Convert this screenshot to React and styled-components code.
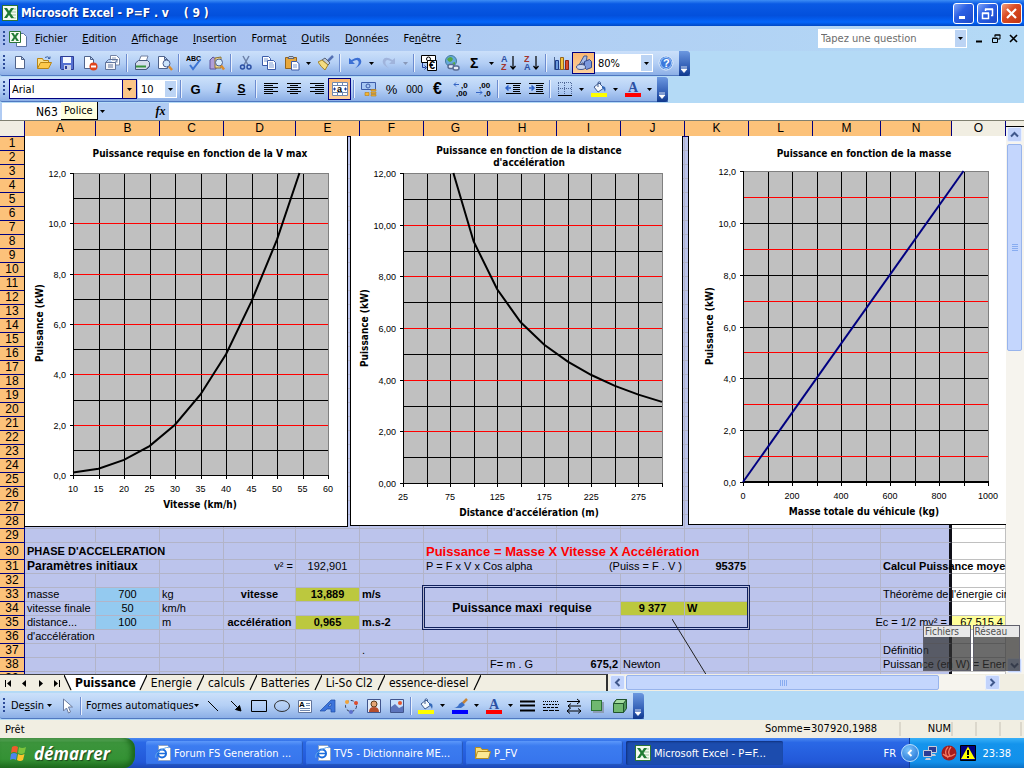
import React from "react";
import styled, { createGlobalStyle, css } from "styled-components";

const ui = `"DejaVu Sans Condensed", "DejaVu Sans", sans-serif`;
const arial = `"Liberation Sans", Arial, sans-serif`;

const c = {
  pane: "#b4daf6",
  beige: "#f1eee2",
  lavender: "#bcc4ec",
  orange: "#fcc27a",
  navy: "#000080",
  olive: "#bcc83e",
  sky: "#94caf0",
};

const GlobalStyle = createGlobalStyle`
  * { box-sizing: border-box; }
  body { margin: 0; font-family: ${ui}; font-size: 11px; color: #000; }
  button, input, select { font: inherit; color: inherit; margin: 0; padding: 0; border: 0; background: none; }
  svg { display: block; flex: none; }
`;

const Window = styled.div`
  display: flex;
  flex-direction: column;
  height: 100vh;
  min-width: 0;
  overflow: hidden;
  background: ${c.pane};
`;

const TitleBar = styled.header`
  display: flex;
  align-items: center;
  gap: 3px;
  flex: none;
  height: 26px;
  padding: 0 2px;
  background: linear-gradient(#3d8df5, #0a5ae4 15%, #0350dc 60%, #0466fb 85%, #0048c4);
  color: #fff;
`;

const WindowTitle = styled.h1`
  flex: 1;
  margin: 0;
  font-size: 12px;
  font-weight: bold;
  white-space: pre;
  text-shadow: 1px 1px #0a2f8c;
`;

const CaptionButton = styled.button`
  display: flex;
  align-items: center;
  justify-content: center;
  width: 21px;
  height: 21px;
  border: 1px solid #fff;
  border-radius: 3px;
  background: ${(props) =>
    props.$close
      ? "linear-gradient(135deg, #f0a080, #dc4c24 40%, #c03410)"
      : "linear-gradient(135deg, #80a4f8, #2c60e4 40%, #1c48c8)"};
`;

const MenuBar = styled.nav`
  display: flex;
  align-items: center;
  flex: none;
  height: 25px;
  padding-right: 2px;
  background: linear-gradient(90deg, #a8bef0, #b0cdf3 50%, ${c.pane});
`;

const Grip = styled.span`
  flex: none;
  width: 3px;
  height: 16px;
  margin: 0 3px;
  background: repeating-linear-gradient(#2c4a98 0 2px, transparent 2px 4px);
  background-size: 2px 100%;
  background-repeat: no-repeat;
`;

const Menus = styled.div`
  display: flex;
  padding-left: 1px;
`;

const MenuItem = styled.button`
  height: 20px;
  padding: 0 8px 0 7px;
`;

const Spacer = styled.div`
  flex: 1;
`;

const AskBox = styled.label`
  display: flex;
  width: 149px;
  height: 19px;
  margin-right: 4px;
  border: 1px solid #fff;
  background: #fff;

  input {
    flex: 1;
    min-width: 0;
    padding-left: 2px;
    outline: 0;
  }

  input::placeholder {
    color: #6c6c6c;
    opacity: 1;
  }
`;

const ArrowBox = styled.span`
  display: flex;
  align-items: center;
  justify-content: center;
  flex: none;
  width: ${(props) => (props.$hot ? 14 : 11)}px;
  background: ${(props) => (props.$hot ? "#fbc687" : "#bcd4f4")};
  border-left: ${(props) => (props.$hot ? "1px solid #000080" : 0)};
`;

const MdiButton = styled.button`
  display: flex;
  align-items: center;
  justify-content: center;
  width: 17px;
  height: 16px;
`;

const ToolRow = styled.div`
  display: flex;
  flex: none;
  height: ${(props) => (props.$tall ? 27 : 26)}px;
  padding-bottom: 1px;
`;

const Toolbar = styled.div`
  display: flex;
  align-items: center;
  border-radius: 2px 0 0 2px;
  border-bottom: 1px solid #5078c0;
  background: linear-gradient(#cbe0fa, #b4cff5 50%, #8cafe6);
`;

const ToolButton = styled.button`
  display: flex;
  align-items: center;
  justify-content: center;
  flex: none;
  width: 23px;
  height: 22px;
  ${(props) =>
    props.$on &&
    css`
      border: 1px solid ${c.navy};
      background: linear-gradient(#fbb872, #fcd09c);
    `}
`;

const DropButton = styled.button`
  display: flex;
  align-items: center;
  justify-content: center;
  flex: none;
  width: 11px;
  height: ${(props) => (props.$short ? 17 : 22)}px;
`;

const TextButton = styled.button`
  display: flex;
  align-items: center;
  justify-content: space-between;
  flex: none;
  width: ${(props) => (props.$wide ? 117 : 46)}px;
  height: 22px;
  padding: 0 3px 0 2px;
  white-space: nowrap;
`;

const Separator = styled.span`
  flex: none;
  width: 1px;
  height: 18px;
  margin: 0 3px 0 2px;
  background: #6c8cd0;
  box-shadow: 1px 0 #e8f0fc;
`;

const EndCap = styled.button`
  display: flex;
  align-items: flex-end;
  justify-content: center;
  flex: none;
  align-self: stretch;
  width: 11px;
  margin: 0 0 -1px 2px;
  padding-bottom: 3px;
  border-radius: 0 3px 3px 0;
  background: linear-gradient(#6c98e0, #2c58b0 70%, #10388c);
`;

const Combo = styled.label`
  display: flex;
  flex: none;
  width: ${(props) => props.$w}px;
  height: ${(props) => (props.$hot ? 20 : 18)}px;
  margin-right: 1px;
  border: 1px solid ${(props) => (props.$hot ? c.navy : "#fff")};
  background: #fff;

  select {
    flex: 1;
    min-width: 0;
    padding-left: 2px;
    appearance: none;
    outline: 0;
  }
`;

const FormulaBar = styled.div`
  position: relative;
  display: flex;
  align-items: stretch;
  flex: none;
  height: 17px;
  padding-left: 2px;
  background: #b0cbf3;
`;

const NameBox = styled.input`
  width: 95px;
  padding-left: 34px;
  background: #fff;
  font-size: 12px;
  outline: 0;
`;

const FxButton = styled.button`
  width: 17px;
  margin-left: 44px;
  font: italic bold 12px "Liberation Serif", serif;
`;

const FormulaInput = styled.input`
  flex: 1;
  min-width: 0;
  background: #fff;
  outline: 0;
`;

const Tooltip = styled.div`
  position: absolute;
  left: 61px;
  top: -1px;
  height: 18px;
  padding: 0 4px 0 3px;
  border: solid #000;
  border-width: 0 1px 1px 0;
  background: #ffffe1;
  line-height: 18px;
`;

const SheetArea = styled.main`
  display: flex;
  flex: 1;
  min-height: 0;
  border-top: 1px solid #808070;
  background: ${c.beige};
`;

const SheetView = styled.div`
  position: relative;
  flex: 1;
  min-width: 0;
  overflow: hidden;
`;

const Grid = styled.table`
  width: 100%;
  table-layout: fixed;
  border-collapse: separate;
  border-spacing: 0;
  font-family: ${arial};
  font-size: 11px;
  line-height: 13px;
  white-space: pre;
`;

const Head = styled.th`
  height: ${(props) => (props.$row ? 14 : 16)}px;
  padding: 0;
  border: solid ${c.navy};
  border-width: 0 1px 1px 0;
  background: ${(props) => (props.$plain ? c.beige : c.orange)};
  font-size: 12px;
  font-weight: normal;
  text-align: center;
`;

const Cell = styled.td`
  height: ${(props) => (props.$tall ? 17 : 14)}px;
  padding: 0 2px;
  border: solid ${(props) => (props.$plain ? "#c0c0c0" : "#b2b4c8")};
  border-width: 0 1px 1px 0;
  background: ${(props) =>
    props.$fill || (props.$plain ? "#fff" : c.lavender)};
  text-align: ${(props) => props.$align || "left"};
  font-weight: ${(props) => (props.$bold ? "bold" : "normal")};
  font-size: ${(props) => props.$size || 11}px;
  color: ${(props) => props.$color || "#000"};
  ${(props) => props.$thick && "border-right: 3px solid #101018;"}
`;

/* objects floating over the grid, placed from the sheet's origin */
const Floating = styled.figure`
  position: absolute;
  left: ${(props) => props.$x}px;
  top: ${(props) => props.$y}px;
  margin: 0;
`;

const ChartSvg = styled.svg`
  background: #fff;
  border: 1px solid #000;
  border-top-width: 0;

  text {
    font: bold 10px ${ui};
    text-anchor: middle;
  }

  .scale text {
    font: 9px ${arial};
  }

  .left text {
    text-anchor: end;
  }
`;

const Frame = styled.div`
  width: 328px;
  height: 45px;
  border: 3px double #10205c;
`;

const TrafficMeter = styled.div`
  position: absolute;
  right: 4px;
  bottom: 3px;
  display: grid;
  grid-template-columns: 1fr 1fr;
  gap: 0 2px;
  width: 97px;
  height: 46px;
  z-index: 2;
`;

const Meter = styled.div`
  display: flex;
  flex-direction: column;
  border: 1px solid #60606c;
  background: rgba(50, 50, 50, 0.72);

  span {
    height: 11px;
    padding-left: 1px;
    background: rgba(255, 255, 255, 0.85);
    color: #505050;
    font-size: 10px;
    line-height: 11px;
  }
`;

const SheetWrap = styled.div`
  position: relative;
  display: flex;
  flex: 1;
  min-width: 0;
`;

const VScroll = styled.div`
  display: flex;
  flex-direction: column;
  flex: none;
  width: 18px;
  margin-top: 5px;
  padding: 0 2px 1px 1px;
  border-top: 1px solid #000;
  background: #f6f4ee;
`;

const ScrollButton = styled.button`
  display: flex;
  align-items: center;
  justify-content: center;
  flex: none;
  width: 15px;
  height: 15px;
  border: 1px solid #e8f0ff;
  border-radius: 2px;
  background: #c2d3fc;
`;

const VThumb = styled.div`
  display: flex;
  align-items: center;
  justify-content: center;
  height: 38%;
  margin-top: 2px;
  border: 1px solid #98b4ec;
  border-radius: 2px;
  background: #c4d6fd;
`;

const BottomBar = styled.div`
  display: grid;
  grid-template-columns: minmax(0, 19fr) minmax(0, 13fr);
  flex: none;
  height: 17px;
  margin-bottom: 2px;
  background: ${c.beige};
`;

const TabStrip = styled.div`
  display: flex;
  border-top: 1px solid #404040;
  border-right: 2px solid #303030;
  overflow: hidden;
`;

const NavButton = styled.button`
  display: flex;
  align-items: center;
  justify-content: center;
  width: 16px;
`;

const Tab = styled.button`
  padding: 0 ${(props) => (props.$active ? 3 : 4)}px;
  background: ${(props) => (props.$active ? "#fff" : "transparent")};
  font-size: 12px;
  font-weight: ${(props) => (props.$active ? "bold" : "normal")};
  line-height: 15px;
  white-space: nowrap;
`;

const HScroll = styled.div`
  display: flex;
  padding: 1px 24px 1px 2px;
`;

const HThumb = styled.div`
  display: flex;
  align-items: center;
  justify-content: center;
  width: 87%;
  height: 15px;
  margin-left: 1px;
  border: 1px solid #98b4ec;
  border-radius: 2px;
  background: #c4d6fd;
`;

const HTrack = styled.div`
  display: flex;
  flex: 1;
  background: #f6f4ee;
`;

const StatusBar = styled.footer`
  display: flex;
  align-items: center;
  flex: none;
  height: 18px;
  padding: 0 2px 0 5px;
  background: ${c.beige};
`;

const StatusPanel = styled.span`
  height: 14px;
  width: ${(props) => props.$w}px;
  border-right: 2px solid #dcd8cc;
  line-height: 14px;
  text-align: ${(props) => props.$align || "center"};
`;

const Taskbar = styled.div`
  display: flex;
  align-items: center;
  flex: none;
  height: 30px;
  background: linear-gradient(#4a88f0, #2a68e6 15%, #2258d8 80%, #1c48b4);
  color: #fff;
`;

const StartButton = styled.button`
  display: flex;
  align-items: center;
  gap: 6px;
  flex: none;
  width: 135px;
  height: 30px;
  padding-left: 10px;
  border-radius: 0 10px 12px 0;
  background: linear-gradient(#6cb46c, #3c943c 15%, #349234 70%, #206c20);
  box-shadow: inset -4px 0 5px #1c681c;
  color: #fff;
  font: italic bold 17px "Open Sans", sans-serif;
  text-shadow: 1px 1px 1px #1c441c;
`;

const Tasks = styled.div`
  display: flex;
  flex: 1;
  gap: 3px;
  min-width: 0;
  margin: 0 11px;
`;

const TaskButton = styled.button`
  display: flex;
  align-items: center;
  gap: 3px;
  flex: 0 1 157px;
  min-width: 0;
  height: 24px;
  padding: 0 9px;
  overflow: hidden;
  border-radius: 2px;
  background: ${(props) =>
    props.$active ? "#1c4cae" : "linear-gradient(#5c98fa, #3c7cf0 20%, #3674ec)"};
  box-shadow: ${(props) =>
    props.$active ? "inset 1px 1px 2px #10307c" : "inset -1px -1px 1px #2454b8"};
  white-space: nowrap;
`;

const Lang = styled.span`
  width: 26px;
`;

const Tray = styled.div`
  display: flex;
  align-items: center;
  gap: 3px;
  flex: none;
  height: 30px;
  padding-right: 13px;
  border-left: 1px solid #103c9c;
  background: linear-gradient(#38b0f8, #1494ec 20%, #1290ea 80%, #0c70c4);

  time {
    margin-left: 3px;
  }
`;

const TrayArrow = styled.button`
  display: flex;
  align-items: center;
  justify-content: center;
  width: 18px;
  height: 18px;
  margin-left: -9px;
  border: 1px solid #bce0fc;
  border-radius: 50%;
  background: radial-gradient(circle at 40% 30%, #7cc4fc, #1468d0);
`;

function Svg({ w = 16, h = 16, children, ...rest }) {
  return (
    <svg width={w} height={h} viewBox={`0 0 ${w} ${h}`} fill="none" aria-hidden="true" {...rest}>
      {children}
    </svg>
  );
}

const Down = ({ color = "#000" }) => (
  <Svg w={5} h={3}>
    <path d="M0 0h5L2.500 3z" fill={color} />
  </Svg>
);

const Page = ({ x = 0, y = 0 }) => (
  <path d={`M${x + 2.5} ${y + 1.5}h6l3 3v9h-9z m6 0v3h3`} fill="#fff" stroke="#50648c" />
);

const Lines = ({ rows, color = "#000" }) =>
  rows.map(([x, w], i) => <rect key={i} x={x} y={2 + i * 2} width={w} height="1" fill={color} />);

const Bucket = () => (
  <>
    <path d="M3 6l5-4 5 5-6 4z" fill="#f4f8fc" stroke="#405c90" />
    <path d="M7 6V1.500q1.500-1.500 2.500 0V4" stroke="#405c90" />
    <path d="M11 5q5 0 3 6-1-3-3-4z" fill="#3468b8" />
  </>
);

const LetterA = () => (
  <text x="8" y="11" textAnchor="middle" fontSize="14" fontWeight="bold" fontFamily="Liberation Serif, serif" fill="#2c50a4">
    A
  </text>
);

const Mini = ({ x, y, size = 9, fill = "#000", children }) => (
  <text x={x} y={y} fontSize={size} fontWeight="bold" fontFamily="Liberation Sans, sans-serif" fill={fill}>
    {children}
  </text>
);

const icons = {
  excel: (
    <>
      <rect x=".5" y=".5" width="15" height="15" fill="#f4fbf0" stroke="#2c7438" />
      <path d="M9 4h5M9 7h5M9 10h5M9 13h5" stroke="#9cc49c" />
      <path d="M2 3h3l2 3 2-3h3L8.500 8l3.500 5H9L7 10l-2 3H2l3.500-5z" fill="#207c34" />
    </>
  ),
  nouveau: <Page />,
  ouvrir: (
    <>
      <path d="M1.500 13.500v-10h5l1 2h5v3" fill="#fce088" stroke="#b88414" />
      <path d="M1.500 13.500l3-6h11l-3 6z" fill="#fcc84c" stroke="#b88414" />
      <path d="M9 2.500q3-2 5 1m0-2v2h-2" stroke="#3c64a8" />
    </>
  ),
  enregistrer: (
    <>
      <path d="M1.500 1.500h13v13h-12l-1-1z" fill="#5470d0" stroke="#2c3c94" />
      <rect x="4" y="2" width="8" height="6" fill="#f4f8ff" />
      <rect x="5" y="10" width="7" height="5" fill="#c8d0e8" />
      <rect x="6" y="11" width="2" height="3" fill="#2c3c94" />
    </>
  ),
  autorisation: (
    <>
      <Page />
      <circle cx="11.500" cy="11.500" r="4" fill="#e0441c" />
      <path d="M9 11.500h5" stroke="#fff" strokeWidth="2" />
    </>
  ),
  message: (
    <>
      <path d="M5.500 5V.5h6l3 3V10h-5" fill="#fff" stroke="#7484a4" />
      <path d="M7 3h4M7 5h6M10 7h3" stroke="#90a0bc" />
      <path d="M.5 7.500h10v7H.5z" fill="#f4f4f8" stroke="#60749c" />
      <path d="M.5 7.500l3-3h9l-2 3M3 10h5M3 12h5" stroke="#60749c" />
    </>
  ),
  imprimer: (
    <>
      <path d="M5 6l2-5h7l-2 6z" fill="#fff" stroke="#7080a0" />
      <path d="M1.500 8l3-2.500h9l2 2v4l-3 3h-11z" fill="#d4dcec" stroke="#44587c" />
      <path d="M2 11.500h10" stroke="#38943c" strokeWidth="2" />
      <path d="M12.500 14l3-3" stroke="#44587c" />
    </>
  ),
  apercu: (
    <>
      <Page x={-1} />
      <circle cx="9.500" cy="8.500" r="3.500" fill="#cce4fc" stroke="#4c6090" />
      <path d="M12 11.500l3 3.500" stroke="#dc8c2c" strokeWidth="2.500" />
    </>
  ),
  orthographe: (
    <>
      <Mini x="0" y="6" size={7}>ABC</Mini>
      <path d="M4 10l3 4 7-9" stroke="#3c74d4" strokeWidth="2" />
    </>
  ),
  recherche: (
    <>
      <path d="M1 5l3-3 3 2v10H1z" fill="#b0a0d8" stroke="#5c549c" />
      <path d="M6 3l6-1v11H6z" fill="#f0d890" stroke="#8c7434" />
      <circle cx="10" cy="7.500" r="3.500" fill="#d8ecfc" stroke="#4c6090" />
      <path d="M12 10.500l3 4" stroke="#dc8c2c" strokeWidth="2.500" />
    </>
  ),
  couper: (
    <>
      <path d="M5 1l5 9M11 1l-5 9" stroke="#6c80a8" strokeWidth="1.500" />
      <circle cx="4.500" cy="12" r="2" stroke="#2c50a4" strokeWidth="1.500" />
      <circle cx="11" cy="12" r="2" stroke="#2c50a4" strokeWidth="1.500" />
    </>
  ),
  copier: (
    <>
      <path d="M1.500 1.500h6l2 2v7h-8z" fill="#fff" stroke="#3c5ca8" />
      <path d="M6.500 5.500h6l2 2v7h-8z" fill="#fff" stroke="#3c5ca8" />
      <path d="M3 4h4M3 6h3M8 8h4M8 10h5M8 12h5" stroke="#7c9cd4" />
    </>
  ),
  coller: (
    <>
      <path d="M1.500 2.500h11v11h-11z" fill="#e8a83c" stroke="#94641c" />
      <path d="M4 3.500l1-2h4l1 2z" fill="#c8ccd8" stroke="#606878" />
      <path d="M7.500 6.500h5l2.500 2v6.500H7.500z" fill="#fff" stroke="#3c5ca8" />
      <path d="M9 10h4M9 12h4" stroke="#7c9cd4" />
    </>
  ),
  pinceau: (
    <>
      <path d="M15 1l-5 5" stroke="#5470b4" strokeWidth="2.500" />
      <path d="M7 3l5 5-2 2-6-5z" fill="#c0c8d4" stroke="#586478" />
      <path d="M4 5l6 5-3 5Q3 12 0 7z" fill="#f4dc80" stroke="#a4842c" />
    </>
  ),
  annuler: (
    <path d="M2 3v6h6L5.500 6.500q5-3 6 0t-3.500 7q8-4 6-8.500T4.500 5z" fill="#3c70d4" />
  ),
  retablir: (
    <path d="M14 3v6H8l2.500-2.500q-5-3-6 0t3.500 7q-8-4-6-8.500T11.500 5z" fill="#a0b4dc" />
  ),
  euros: (
    <>
      <path d="M.5.5h14v7H.5z" fill="#fff" stroke="#000" />
      <circle cx="7.500" cy="4" r="2" stroke="#000" />
      <path d="M6.500 5.500h9v10h-9z" fill="#fff" stroke="#000" />
      <Mini x="8" y="14" size={11}>€</Mini>
      <path d="M1.500 8v4.500h3m-1-2l2 2-2 2" stroke="#1c3c9c" />
    </>
  ),
  lien: (
    <>
      <circle cx="7" cy="6" r="5.500" fill="#64a8dc" stroke="#447c9c" />
      <path d="M3 4q4-4 6 0-1 3-3 3T3 4zM8 8l3-1v3z" fill="#54a844" />
      <rect x="4" y="9.500" width="6" height="4" rx="2" fill="#e4ecf8" stroke="#586c94" strokeWidth="1.500" />
      <rect x="9" y="11" width="6" height="4" rx="2" fill="#e4ecf8" stroke="#586c94" strokeWidth="1.500" />
    </>
  ),
  somme: <Mini x="3" y="13" size={14}>Σ</Mini>,
  croissant: (
    <>
      <Mini x="0" y="7" size={9} fill="#2c50a4">A</Mini>
      <Mini x="0" y="15" size={9} fill="#a4342c">Z</Mini>
      <path d="M12 1v13M9.500 11l2.500 3 2.500-3" stroke="#000" strokeWidth="1.200" />
    </>
  ),
  decroissant: (
    <>
      <Mini x="0" y="7" size={9} fill="#a4342c">Z</Mini>
      <Mini x="0" y="15" size={9} fill="#2c50a4">A</Mini>
      <path d="M12 1v13M9.500 11l2.500 3 2.500-3" stroke="#000" strokeWidth="1.200" />
    </>
  ),
  graphique: (
    <>
      <path d="M1.500 2v12.500H16" stroke="#506890" />
      <path d="M2.500 5.500h3v9h-3z" fill="#6c9cdc" stroke="#1c3c8c" />
      <path d="M7.500 2.500h3v12h-3z" fill="#f4c43c" stroke="#94641c" />
      <path d="M12.500 5.500h3v9h-3z" fill="#dc4c2c" stroke="#8c2414" />
    </>
  ),
  dessin: (
    <>
      <path d="M3 10l5-9h3l-1 9H7.500V8H6l-1 2z" fill="#a8bce8" stroke="#44588c" />
      <path d="M8.500 6.500l5-2 2 2v6l-5 2-2-2z" fill="#7c98dc" stroke="#34488c" />
      <ellipse cx="5" cy="12" rx="4.500" ry="2.500" fill="#c8d4f0" stroke="#44588c" />
    </>
  ),
  aide: (
    <>
      <circle cx="8" cy="8" r="7" fill="#3c78dc" stroke="#e4f0fc" />
      <circle cx="8" cy="8" r="5.500" stroke="#a8ccf8" />
      <Mini x="5" y="12" size={11} fill="#fff">?</Mini>
    </>
  ),
  gauche: <Lines rows={[[1, 14], [1, 9], [1, 14], [1, 9], [1, 14], [1, 9]]} />,
  centre: <Lines rows={[[1, 14], [4, 8], [1, 14], [4, 8], [1, 14], [4, 8]]} />,
  droite: <Lines rows={[[1, 14], [6, 9], [1, 14], [6, 9], [1, 14], [6, 9]]} />,
  fusion: (
    <>
      <path d="M.5 1.500h15v13H.5zM.5 4.500h15M.5 11.500h15M5.500 1v3M10.500 1v3M5.500 12v3M10.500 12v3" fill="#fff" stroke="#7088b0" />
      <Mini x="5" y="11" size={9}>a</Mini>
      <path d="M1 8h3M2.500 6.500v3M15 8h-3M13.500 6.500v3" stroke="#1c3c9c" />
    </>
  ),
  monetaire: (
    <>
      <path d="M.5 1.500h14v7H.5z" fill="#a8c8f4" stroke="#3c5ca8" />
      <circle cx="7" cy="5" r="2" stroke="#3c5ca8" />
      <path d="M10 8.500h5v1.500h-5zM10 11h5v1.500h-5zM10 13.500h5v1.500h-5zM4 11.500h4v3H4z" fill="#f4b434" stroke="#b47c14" strokeWidth=".6" />
    </>
  ),
  ajoutDecimale: (
    <>
      <Mini x="8" y="7" size={8}>,0</Mini>
      <Mini x="3" y="15" size={8}>,00</Mini>
      <path d="M6 3.500H1m2-2l-2 2 2 2" stroke="#3464c4" />
    </>
  ),
  retraitDecimale: (
    <>
      <Mini x="3" y="7" size={8}>,00</Mini>
      <Mini x="8" y="15" size={8}>,0</Mini>
      <path d="M0 11.500h6m-2-2l2 2-2 2" stroke="#3464c4" />
    </>
  ),
  diminuerRetrait: (
    <>
      <Lines rows={[[1, 15], [8, 7], [8, 7], [8, 7], [8, 7], [1, 15]]} />
      <path d="M6 7H1m2.500-2.500L1 7l2.500 2.500" stroke="#2c60c8" strokeWidth="1.500" />
    </>
  ),
  augmenterRetrait: (
    <>
      <Lines rows={[[1, 15], [8, 7], [8, 7], [8, 7], [8, 7], [1, 15]]} />
      <path d="M1 7h5M3.500 4.500L6 7 3.500 9.500" stroke="#2c60c8" strokeWidth="1.500" />
    </>
  ),
  bordures: (
    <>
      <path d="M1.500 2v12M7.500 2v12M14.500 2v12M1 1.500h14M1 7.500h14" stroke="#506898" strokeDasharray="1 1" />
      <path d="M1 14.500h14" stroke="#000" />
    </>
  ),
  remplissage: (
    <>
      <Bucket />
      <rect y="12" width="16" height="4" fill="#ff0" />
    </>
  ),
  couleurTexte: (
    <>
      <LetterA />
      <rect y="12" width="16" height="4" fill="#f00" />
    </>
  ),
  couleurTrait: (
    <>
      <path d="M15 1l-5 5" stroke="#c88434" strokeWidth="2.500" />
      <path d="M10 4l3 3-4 3H2q4-1 5-4z" fill="#3c70c8" />
      <rect y="12" width="16" height="4" fill="#00f" />
    </>
  ),
  pointeur: <path d="M4.500 1v12l3-3 2 5 2-1-2-5h4z" fill="#fff" stroke="#6c7ca0" />,
  trait: <path d="M3 3l10 10" stroke="#000" />,
  fleche: <path d="M3 3l7 7M13 13l-1.500-5.500-4 4z" stroke="#000" fill="#000" />,
  rectangle: <path d="M.5 2.500h15v11H.5z" stroke="#000" />,
  ellipse: <ellipse cx="8" cy="8" rx="7.500" ry="5.500" stroke="#303030" />,
  zoneTexte: (
    <>
      <path d="M1.500 2.500h13v12h-13z" fill="#fff" stroke="#60749c" />
      <Mini x="2" y="9" size={8}>A</Mini>
      <path d="M9 5.500h4M9 7.500h4M3 10.500h10M3 12.500h10" stroke="#7088b0" />
    </>
  ),
  wordart: <path d="M0 13l11-11h4v12h-4v-3H7l-2 2zM8 8h3V5z" fill="#3c74dc" fillRule="evenodd" stroke="#1c4ca4" strokeWidth=".7" />,
  diagramme: (
    <>
      <circle cx="8" cy="8" r="5.500" stroke="#303c5c" strokeDasharray="3 2" />
      <circle cx="4" cy="4" r="2" fill="#f0a43c" />
      <circle cx="13" cy="5" r="2" fill="#dc4c2c" />
      <circle cx="8" cy="14" r="2" fill="#5c70cc" />
    </>
  ),
  clipart: (
    <>
      <path d="M1.500 1.500h13v13h-13z" fill="#e4ecf8" stroke="#40548c" />
      <circle cx="8" cy="6" r="3" fill="#e4a474" stroke="#5c3c1c" />
      <path d="M3 14q0-5 5-5t5 5z" fill="#b44c2c" />
    </>
  ),
  image: (
    <>
      <path d="M1.500 1.500h13v13h-13z" fill="#c8e0fc" stroke="#40548c" />
      <path d="M2 14V9l4-3 4 4 4-2v6z" fill="#5c74bc" />
      <circle cx="11" cy="5" r="2" fill="#e4542c" />
    </>
  ),
  epaisseur: <path d="M0 3.500h15M0 7.500h15M0 12.500h15" stroke="#000" strokeWidth="2" />,
  tirets: (
    <>
      <path d="M0 3.500h16" stroke="#000" strokeDasharray="1 1" />
      <path d="M0 6.500h16" stroke="#000" strokeDasharray="2 1" />
      <path d="M0 9.500h16" stroke="#000" strokeDasharray="3 1" />
      <path d="M0 12.500h16" stroke="#000" strokeDasharray="5 1" />
    </>
  ),
  fleches: (
    <path d="M1 3.500h13m-3-2.500l3 2.500-3 2.500M15 8H2m3-2.500L2 8l3 2.500M1 13h14m-3-2.500l3 2.500-3 2.500M4 10.500L1 13l3 2.500" stroke="#000" />
  ),
  ombre: (
    <>
      <rect x="4" y="4" width="11" height="11" fill="#8c9cb4" />
      <rect x="2.500" y="2.500" width="10" height="10" fill="#70b870" stroke="#2c7434" />
    </>
  ),
  relief: (
    <>
      <path d="M1.500 5.500l3-4h10v9l-3 4z" fill="#50985c" stroke="#20542c" />
      <path d="M1.500 5.500l3-4h10l-3 4z" fill="#a4dca0" stroke="#20542c" />
      <path d="M1.500 5.500h10v9h-10z" fill="#70b870" stroke="#20542c" />
    </>
  ),
  ie: (
    <>
      <path d="M3.500.5h9l3 3v12h-12z" fill="#fff" stroke="#90a4c4" />
      <circle cx="7" cy="8.500" r="4" stroke="#1c6cdc" strokeWidth="2" />
      <path d="M4 8.500h7" stroke="#1c6cdc" strokeWidth="1.500" />
      <path d="M1 13Q-1 9 6 5t8-2" stroke="#5ca4ec" />
    </>
  ),
  dossier: (
    <>
      <path d="M.5 13.500v-11h5l1.500 2h6v2" fill="#f8dc78" stroke="#b48c20" />
      <path d="M.5 13.500l2-7h13l-2 7z" fill="#fce894" stroke="#b48c20" />
    </>
  ),
};

const Icon = ({ name }) => <Svg>{icons[name]}</Svg>;

const Glyph = styled.span`
  font: ${(props) => props.$font};
  text-decoration: ${(props) => (props.$underline ? "underline" : "none")};
`;

const glyphs = {
  gras: <Glyph $font={`bold 13px ${arial}`}>G</Glyph>,
  italique: <Glyph $font={`italic bold 14px "Liberation Serif", serif`}>I</Glyph>,
  souligne: <Glyph $font={`bold 12px ${arial}`} $underline>S</Glyph>,
  pourcent: <Glyph $font={`13px ${arial}`}>%</Glyph>,
  milliers: <Glyph $font={`10px ${arial}`}>000</Glyph>,
  euro: <Glyph $font={`bold 16px ${arial}`}>€</Glyph>,
};

/* "|" is a separator, a trailing "+" adds a drop-down arrow, "*" means pressed */
function Tools({ list }) {
  return list.split(" ").map((item, i) => {
    if (item === "|") return <Separator key={i} />;
    const name = item.replace(/[+*]/g, "");
    return (
      <React.Fragment key={i}>
        <ToolButton $on={item.endsWith("*")} aria-label={name}>
          {glyphs[name] || <Icon name={name} />}
        </ToolButton>
        {item.endsWith("+") && (
          <DropButton aria-label={`${name}, options`}>
            <Down color={name === "retablir" ? "#8898b8" : "#000"} />
          </DropButton>
        )}
      </React.Fragment>
    );
  });
}

const Cap = () => (
  <EndCap aria-label="Options de barre d'outils">
    <Svg w={7} h={7}>
      <path d="M0 1h6M0 3h6L3 6.500z" stroke="#fff" fill="#fff" strokeWidth=".8" />
    </Svg>
  </EndCap>
);

function Chart({ width, height, title, xTitle, yTitle, box, xs, xLabels, yLabels, redOdd, points, stroke, thickAxis, labelX, yTitlePos }) {
  const [l, t, r, b] = box;
  const px = (v) => l + ((r - l) * (v - xs.min)) / (xs.max - xs.min);
  const py = (v) => b - ((b - t) * v) / 12;
  const snap = (v) => Math.round(v) + 0.5;
  const cols = [];
  for (let v = xs.min; v <= xs.max; v += xs.step) cols.push(v);
  const rows = [1, 2, 3, 4, 5, 6, 7, 8, 9, 10, 11];
  const isRed = (v) => (v % 2 === 1) === !!redOdd;

  return (
    <ChartSvg width={width} height={height} role="img" aria-label={title.join(" ")}>
      <rect x={l} y={t} width={r - l + 1} height={b - t} fill="#c0c0c0" />
      {cols.map((v) => (
        <path key={v} d={`M${snap(px(v))} ${v === xs.max ? b : t}V${b + 4}`} stroke="#000" />
      ))}
      {rows.map((v) => (
        <path key={v} d={`M${l + 1} ${snap(py(v))}H${r}`} stroke={isRed(v) ? "#f00" : "#000"} />
      ))}
      <path d={`M${r + 0.5} ${t}V${b}M${l} ${t + 0.5}H${r}`} stroke="#808080" />
      {[0, 2, 4, 6, 8, 10, 12].map((v) => (
        <path key={v} d={`M${l - 3} ${snap(py(v))}h4`} stroke="#000" />
      ))}
      <path d={`M${l} ${b + (thickAxis ? 0 : 0.5)}H${r + 1}`} stroke="#000" strokeWidth={thickAxis ? 2 : 1} />
      <polyline
        points={points.map(([x, y]) => `${px(x)},${py(y)}`).join(" ")}
        fill="none"
        stroke={stroke}
        strokeWidth="2"
      />
      {title.map((line, i) => (
        <text key={i} x={labelX} y={(title.length > 1 ? 18 : 21) + i * 12}>
          {line}
        </text>
      ))}
      <text x={labelX} y={b + 33}>
        {xTitle}
      </text>
      <text transform={`translate(${yTitlePos[0]} ${yTitlePos[1]}) rotate(-90)`}>{yTitle}</text>
      <g className="scale">
        {xLabels.map((v) => (
          <text key={v} x={px(v)} y={b + 17}>
            {v}
          </text>
        ))}
      </g>
      <g className="scale left">
        {yLabels.map((label, i) => (
          <text key={label} x={l - 7} y={py(i * 2) + 4}>
            {label}
          </text>
        ))}
      </g>
    </ChartSvg>
  );
}

const oneDigit = ["0,0", "2,0", "4,0", "6,0", "8,0", "10,0", "12,0"];
const twoDigits = oneDigit.map((s) => s + "0");

const columns = [
  ["A", 71], ["B", 64], ["C", 64], ["D", 72], ["E", 64], ["F", 64], ["G", 64], ["H", 69],
  ["I", 64], ["J", 64], ["K", 64], ["L", 64], ["M", 68], ["N", 71], ["O", 0],
];

const cells = {
  A30: { t: "PHASE D'ACCELERATION", span: 3, bold: true },
  G30: { t: "Puissance = Masse X Vitesse X Accélération", span: 5, bold: true, size: 13, color: "#f00" },
  A31: { t: "Paramètres initiaux", span: 2, bold: true, size: 12 },
  D31: { t: "v² =", align: "right" },
  E31: { t: "192,901", align: "center" },
  G31: { t: "P = F x V x Cos alpha", span: 2 },
  I31: { t: "(Puiss = F . V )", span: 2, align: "right" },
  K31: { t: "95375", align: "right", bold: true },
  N31: { t: "Calcul Puissance moye", bold: true },
  A33: { t: "masse" },
  B33: { t: "700", align: "center", fill: c.sky },
  C33: { t: "kg" },
  D33: { t: "vitesse", align: "center", bold: true },
  E33: { t: "13,889", align: "center", bold: true, fill: c.olive },
  F33: { t: "m/s", bold: true },
  N33: { t: "Théorème de l'énergie cin" },
  A34: { t: "vitesse finale" },
  B34: { t: "50", align: "center", fill: c.sky },
  C34: { t: "km/h" },
  G34: { t: "Puissance maxi  requise", span: 3, align: "center", bold: true, size: 12 },
  J34: { t: "9 377", align: "center", bold: true, fill: c.olive },
  K34: { t: "W", bold: true, fill: c.olive },
  A35: { t: "distance..." },
  B35: { t: "100", align: "center", fill: c.sky },
  C35: { t: "m" },
  D35: { t: "accélération", align: "center", bold: true },
  E35: { t: "0,965", align: "center", bold: true, fill: c.olive },
  F35: { t: "m.s-2", bold: true },
  M35: { t: "Ec = 1/2 mv² =", span: 2, align: "right" },
  O35: { t: "67 515,4", align: "right", fill: "#ffff99" },
  A36: { t: "d'accélération", span: 2 },
  F37: { t: "." },
  N37: { t: "Définition" },
  H38: { t: "F= m . G" },
  I38: { t: "675,2", align: "right", bold: true },
  J38: { t: "Newton" },
  N38: { t: "Puissance (en W) = Energ" },
};

function Row({ n }) {
  const out = [];
  for (let i = 0; i < columns.length; i++) {
    const col = columns[i][0];
    const cell = cells[col + n] || {};
    if (cell.span) i += cell.span - 1;
    out.push(
      <Cell
        key={col}
        colSpan={cell.span}
        $tall={n === 30}
        $plain={col === "O"}
        $thick={columns[i][0] === "N"}
        $align={cell.align}
        $bold={cell.bold}
        $size={cell.size}
        $fill={cell.fill}
        $color={cell.color}
      >
        {cell.t}
      </Cell>
    );
  }
  return (
    <tr>
      <Head scope="row" $row>
        {n}
      </Head>
      {out}
    </tr>
  );
}

function Sheet() {
  return (
    <SheetView>
      <Grid>
        <colgroup>
          <col width="25" />
          {columns.map(([name, w]) => (
            <col key={name} width={w || undefined} />
          ))}
        </colgroup>
        <thead>
          <tr>
            <Head $plain />
            {columns.map(([name]) => (
              <Head key={name} scope="col" $plain={name === "O"}>
                {name}
              </Head>
            ))}
          </tr>
        </thead>
        <tbody>
          {Array.from({ length: 39 }, (_, i) => (
            <Row key={i} n={i + 1} />
          ))}
        </tbody>
      </Grid>

      <Floating $x={24} $y={15}>
        <Chart
          width={324}
          height={391}
          title={["Puissance requise en fonction de la V max"]}
          xTitle="Vitesse (km/h)"
          yTitle="Puissance (kW)"
          box={[48, 37, 303, 339]}
          labelX={175}
          yTitlePos={[18, 187]}
          xs={{ min: 10, max: 60, step: 5 }}
          xLabels={[10, 15, 20, 25, 30, 35, 40, 45, 50, 55, 60]}
          yLabels={oneDigit}
          stroke="#000"
          points={[[10, 0.1], [15, 0.25], [20, 0.6], [25, 1.15], [30, 2], [35, 3.2], [40, 4.8], [45, 6.9], [50, 9.35], [54.4, 12]]}
        />
      </Floating>
      <Floating $x={350} $y={15}>
        <Chart
          width={333}
          height={390}
          title={["Puissance en fonction de la distance", "d'accélération"]}
          xTitle="Distance d'accélération (m)"
          yTitle="Puissance (kW)"
          box={[52, 37, 311, 347]}
          labelX={178}
          yTitlePos={[17, 192]}
          xs={{ min: 25, max: 300, step: 25 }}
          xLabels={[25, 75, 125, 175, 225, 275]}
          yLabels={twoDigits}
          stroke="#000"
          points={[[78.5, 12], [100, 9.35], [125, 7.5], [150, 6.22], [175, 5.35], [200, 4.7], [225, 4.18], [250, 3.76], [275, 3.42], [300, 3.14]]}
        />
      </Floating>
      <Floating $x={688} $y={15}>
        <Chart
          width={336}
          height={389}
          title={["Puissance en fonction de la masse"]}
          xTitle="Masse totale du véhicule (kg)"
          yTitle="Puissance (kW)"
          box={[54, 35, 299, 346]}
          labelX={175}
          yTitlePos={[24, 190]}
          xs={{ min: 0, max: 1000, step: 100 }}
          xLabels={[0, 200, 400, 600, 800, 1000]}
          yLabels={oneDigit}
          redOdd
          thickAxis
          stroke="#000080"
          points={[[0, 0], [900, 12]]}
        />
      </Floating>
      <Floating $x={422} $y={464}>
        <Frame />
      </Floating>
      <Floating $x={672} $y={498}>
        <Svg w={36} h={58}>
          <path d="M0 0l35 57" stroke="#202020" />
        </Svg>
      </Floating>
    </SheetView>
  );
}

const Chevron = ({ turn = 0 }) => (
  <Svg w={9} h={9}>
    <path d="M1 6.500l3.500-3.500L8 6.500" stroke="#40588c" strokeWidth="2" transform={`rotate(${turn} 4.500 4.500)`} />
  </Svg>
);

const Ridges = ({ turn = 0 }) => (
  <Svg w={8} h={8}>
    <path d="M1 .5h6M1 2.500h6M1 4.500h6M1 6.500h6" stroke="#88acf0" transform={`rotate(${turn} 4 4)`} />
  </Svg>
);

const Slash = ({ back, left, right }) => (
  <Svg w={8} h={16}>
    {left && <path d="M0 0h8L1 15H0z" fill="#fff" />}
    {right && <path d="M0 0h8v15H7z" fill="#fff" />}
    <path d={back ? "M0 0l7 15" : "M8 0L1 15"} stroke="#000" strokeWidth="1.200" />
  </Svg>
);

const menus = [["", "F", "ichier"], ["", "E", "dition"], ["", "A", "ffichage"], ["", "I", "nsertion"], ["Forma", "t", ""],
  ["", "O", "utils"], ["", "D", "onnées"], ["Fe", "n", "être"], ["", "?", ""]];

const tabs = ["Puissance", "Energie", "calculs", "Batteries", "Li-So Cl2", "essence-diesel"];

export default function App() {
  return (
    <Window>
      <GlobalStyle />
      <TitleBar>
        <Icon name="excel" />
        <WindowTitle>{"Microsoft Excel - P=F . v    ( 9 )"}</WindowTitle>
        <CaptionButton aria-label="Réduire">
          <Svg w={13} h={13}><path d="M2 10.500h6" stroke="#fff" strokeWidth="3" /></Svg>
        </CaptionButton>
        <CaptionButton aria-label="Restaurer">
          <Svg w={13} h={13}>
            <path d="M4.500 4V2.500h7v6H10M4 2h8" stroke="#fff" strokeWidth="1.500" />
            <path d="M1.500 6.500h6v5h-6zM1 6h7" stroke="#fff" strokeWidth="1.500" />
          </Svg>
        </CaptionButton>
        <CaptionButton $close aria-label="Fermer">
          <Svg w={13} h={13}><path d="M2 2l9 9M11 2l-9 9" stroke="#fff" strokeWidth="2.200" /></Svg>
        </CaptionButton>
      </TitleBar>

      <MenuBar>
        <Grip />
        <Svg w={18} h={16}>
          <path d="M7.500 2.500h7l3 3v10h-10z" fill="#fff" stroke="#5c74a4" />
          <path d="M.5.5h11v11H.5z" fill="#f4fbf0" stroke="#2c7438" />
          <path d="M2 2h2.500L6 4.500 7.500 2H10L7.300 6l2.700 4H7.500L6 7.500 4.500 10H2l2.700-4z" fill="#207c34" />
        </Svg>
        <Menus>
          {menus.map(([a, k, b]) => (
            <MenuItem key={a + k}>
              {a}<u>{k}</u>{b}
            </MenuItem>
          ))}
        </Menus>
        <Spacer />
        <AskBox>
          <input placeholder="Tapez une question" aria-label="Tapez une question" />
          <ArrowBox><Down /></ArrowBox>
        </AskBox>
        <MdiButton aria-label="Réduire le classeur">
          <Svg w={9} h={9}><path d="M1 7.500h6" stroke="#000" strokeWidth="2" /></Svg>
        </MdiButton>
        <MdiButton aria-label="Restaurer le classeur">
          <Svg w={9} h={9}>
            <path d="M3 3V1h5v4H6M2.500 1h6" stroke="#000" />
            <path d="M.5 4.500h5v4h-5zM.5 4h5" stroke="#000" />
          </Svg>
        </MdiButton>
        <MdiButton aria-label="Fermer le classeur">
          <Svg w={9} h={9}><path d="M1 1l7 7M8 1L1 8" stroke="#000" strokeWidth="1.600" /></Svg>
        </MdiButton>
      </MenuBar>

      <ToolRow>
        <Toolbar role="toolbar" aria-label="Standard">
          <Grip />
          <Tools list="nouveau ouvrir enregistrer autorisation message | imprimer apercu | orthographe recherche | couper copier coller+ pinceau | annuler+ retablir+ | euros lien somme+ croissant decroissant | graphique dessin*" />
          <Combo $w={58}>
            <select aria-label="Zoom"><option>80%</option></select>
            <ArrowBox><Down /></ArrowBox>
          </Combo>
          <Tools list="aide" />
          <Cap />
        </Toolbar>
      </ToolRow>

      <ToolRow>
        <Toolbar role="toolbar" aria-label="Mise en forme">
          <Grip />
          <Combo $w={128} $hot>
            <select aria-label="Police"><option>Arial</option></select>
            <ArrowBox $hot><Down /></ArrowBox>
          </Combo>
          <Combo $w={39}>
            <select aria-label="Taille"><option>10</option></select>
            <ArrowBox><Down /></ArrowBox>
          </Combo>
          <Tools list="| gras italique souligne | gauche centre droite fusion* | monetaire pourcent milliers euro ajoutDecimale retraitDecimale | diminuerRetrait augmenterRetrait | bordures+ remplissage+ couleurTexte+" />
          <Cap />
        </Toolbar>
      </ToolRow>

      <FormulaBar>
        <NameBox defaultValue="N63" aria-label="Zone Nom" />
        <DropButton $short aria-label="Liste des noms"><Down /></DropButton>
        <FxButton aria-label="Insérer une fonction">fx</FxButton>
        <FormulaInput aria-label="Formule" />
        <Tooltip role="tooltip">Police</Tooltip>
      </FormulaBar>

      <SheetArea>
        <SheetWrap>
          <Sheet />
          <VScroll>
            <ScrollButton aria-label="Vers le haut"><Chevron /></ScrollButton>
            <VThumb><Ridges /></VThumb>
            <Spacer />
            <ScrollButton aria-label="Vers le bas"><Chevron turn={180} /></ScrollButton>
          </VScroll>
          <TrafficMeter>
            <Meter><span>Fichiers</span></Meter>
            <Meter><span>Réseau</span></Meter>
          </TrafficMeter>
        </SheetWrap>
      </SheetArea>

      <BottomBar>
        <TabStrip>
          <NavButton aria-label="Première feuille"><Svg w={7} h={7}><path d="M.5 0v7" stroke="#000" /><path d="M6 0v7L2 3.500z" fill="#000" /></Svg></NavButton>
          <NavButton aria-label="Feuille précédente"><Svg w={7} h={7}><path d="M5 0v7L1 3.500z" fill="#000" /></Svg></NavButton>
          <NavButton aria-label="Feuille suivante"><Svg w={7} h={7}><path d="M2 0v7l4-3.500z" fill="#000" /></Svg></NavButton>
          <NavButton aria-label="Dernière feuille"><Svg w={7} h={7}><path d="M6.500 0v7" stroke="#000" /><path d="M1 0v7l4-3.500z" fill="#000" /></Svg></NavButton>
          <Slash back right />
          {tabs.map((name, i) => (
            <React.Fragment key={name}>
              <Tab $active={i === 0}>{name}</Tab>
              <Slash left={i === 0} />
            </React.Fragment>
          ))}
        </TabStrip>
        <HScroll>
          <ScrollButton aria-label="Vers la gauche"><Chevron turn={-90} /></ScrollButton>
          <HTrack>
            <HThumb><Ridges turn={90} /></HThumb>
          </HTrack>
          <ScrollButton aria-label="Vers la droite"><Chevron turn={90} /></ScrollButton>
        </HScroll>
      </BottomBar>

      <ToolRow $tall>
        <Toolbar role="toolbar" aria-label="Dessin">
          <Grip />
          <TextButton><span>De<u>s</u>sin</span><Down /></TextButton>
          <Tools list="pointeur |" />
          <TextButton $wide><span>Fo<u>r</u>mes automatiques</span><Down /></TextButton>
          <Tools list="trait fleche rectangle ellipse zoneTexte wordart diagramme clipart image | remplissage+ couleurTrait+ couleurTexte+ epaisseur tirets fleches ombre relief" />
          <Cap />
        </Toolbar>
      </ToolRow>

      <StatusBar>
        <span>Prêt</span>
        <Spacer />
        <StatusPanel $w={136} $align="left">Somme=307920,1988</StatusPanel>
        <StatusPanel $w={52} $align="right">NUM</StatusPanel>
        <StatusPanel $w={24} />
        <StatusPanel $w={24} />
        <StatusPanel $w={21} />
      </StatusBar>

      <Taskbar>
        <StartButton>
          <Svg w={18} h={18}>
            <path d="M2 3q3-2 6 0L7 9Q4 7 1 9z" fill="#f05c2c" />
            <path d="M9 3q3 2 7 0l-1.500 6q-3 2-6.500 0z" fill="#7cc43c" />
            <path d="M1 10q3-2 6 0l-1 6q-3-2-6 0z" fill="#4c84f0" />
            <path d="M8 10q3 2 6.500 0L13 16q-3 2-6 0z" fill="#fcc42c" />
          </Svg>
          démarrer
        </StartButton>
        <Tasks>
          <TaskButton><Icon name="ie" />Forum FS Generation ...</TaskButton>
          <TaskButton><Icon name="ie" />TV5 - Dictionnaire ME...</TaskButton>
          <TaskButton><Icon name="dossier" />P_FV</TaskButton>
          <TaskButton $active><Icon name="excel" />Microsoft Excel - P=F...</TaskButton>
        </Tasks>
        <Lang>FR</Lang>
        <Tray>
          <TrayArrow aria-label="Afficher les icônes cachées">
            <Svg w={8} h={8}><path d="M5.500 1L2.500 4l3 3" stroke="#fff" strokeWidth="1.800" /></Svg>
          </TrayArrow>
          <Svg>
            <path d="M6.500 1.500h8v6h-8z" fill="#2c3c94" stroke="#c8ccd8" />
            <path d="M9 9h4l1 2H8z" fill="#c8ccd8" />
            <path d="M1.500 5.500h8v6h-8z" fill="#2c3c94" stroke="#c8ccd8" />
            <path d="M4 13h4l1 2H3z" fill="#c8ccd8" />
          </Svg>
          <Svg>
            <circle cx="8" cy="8" r="7.500" fill="#a41c1c" />
            <path d="M7 2q-5 5 0 11M10 2Q6 7 9 11M2 9q5 5 12 0" stroke="#f47c64" strokeWidth="1.300" />
          </Svg>
          <Svg>
            <path d="M.5.5h15v15H.5z" fill="#000080" stroke="#000" />
            <path d="M8 1.500L15 14H1z" fill="#ff0" />
            <path d="M8 5v5M8 11v2" stroke="#000" strokeWidth="2" />
          </Svg>
          <time>23:38</time>
        </Tray>
      </Taskbar>
    </Window>
  );
}
